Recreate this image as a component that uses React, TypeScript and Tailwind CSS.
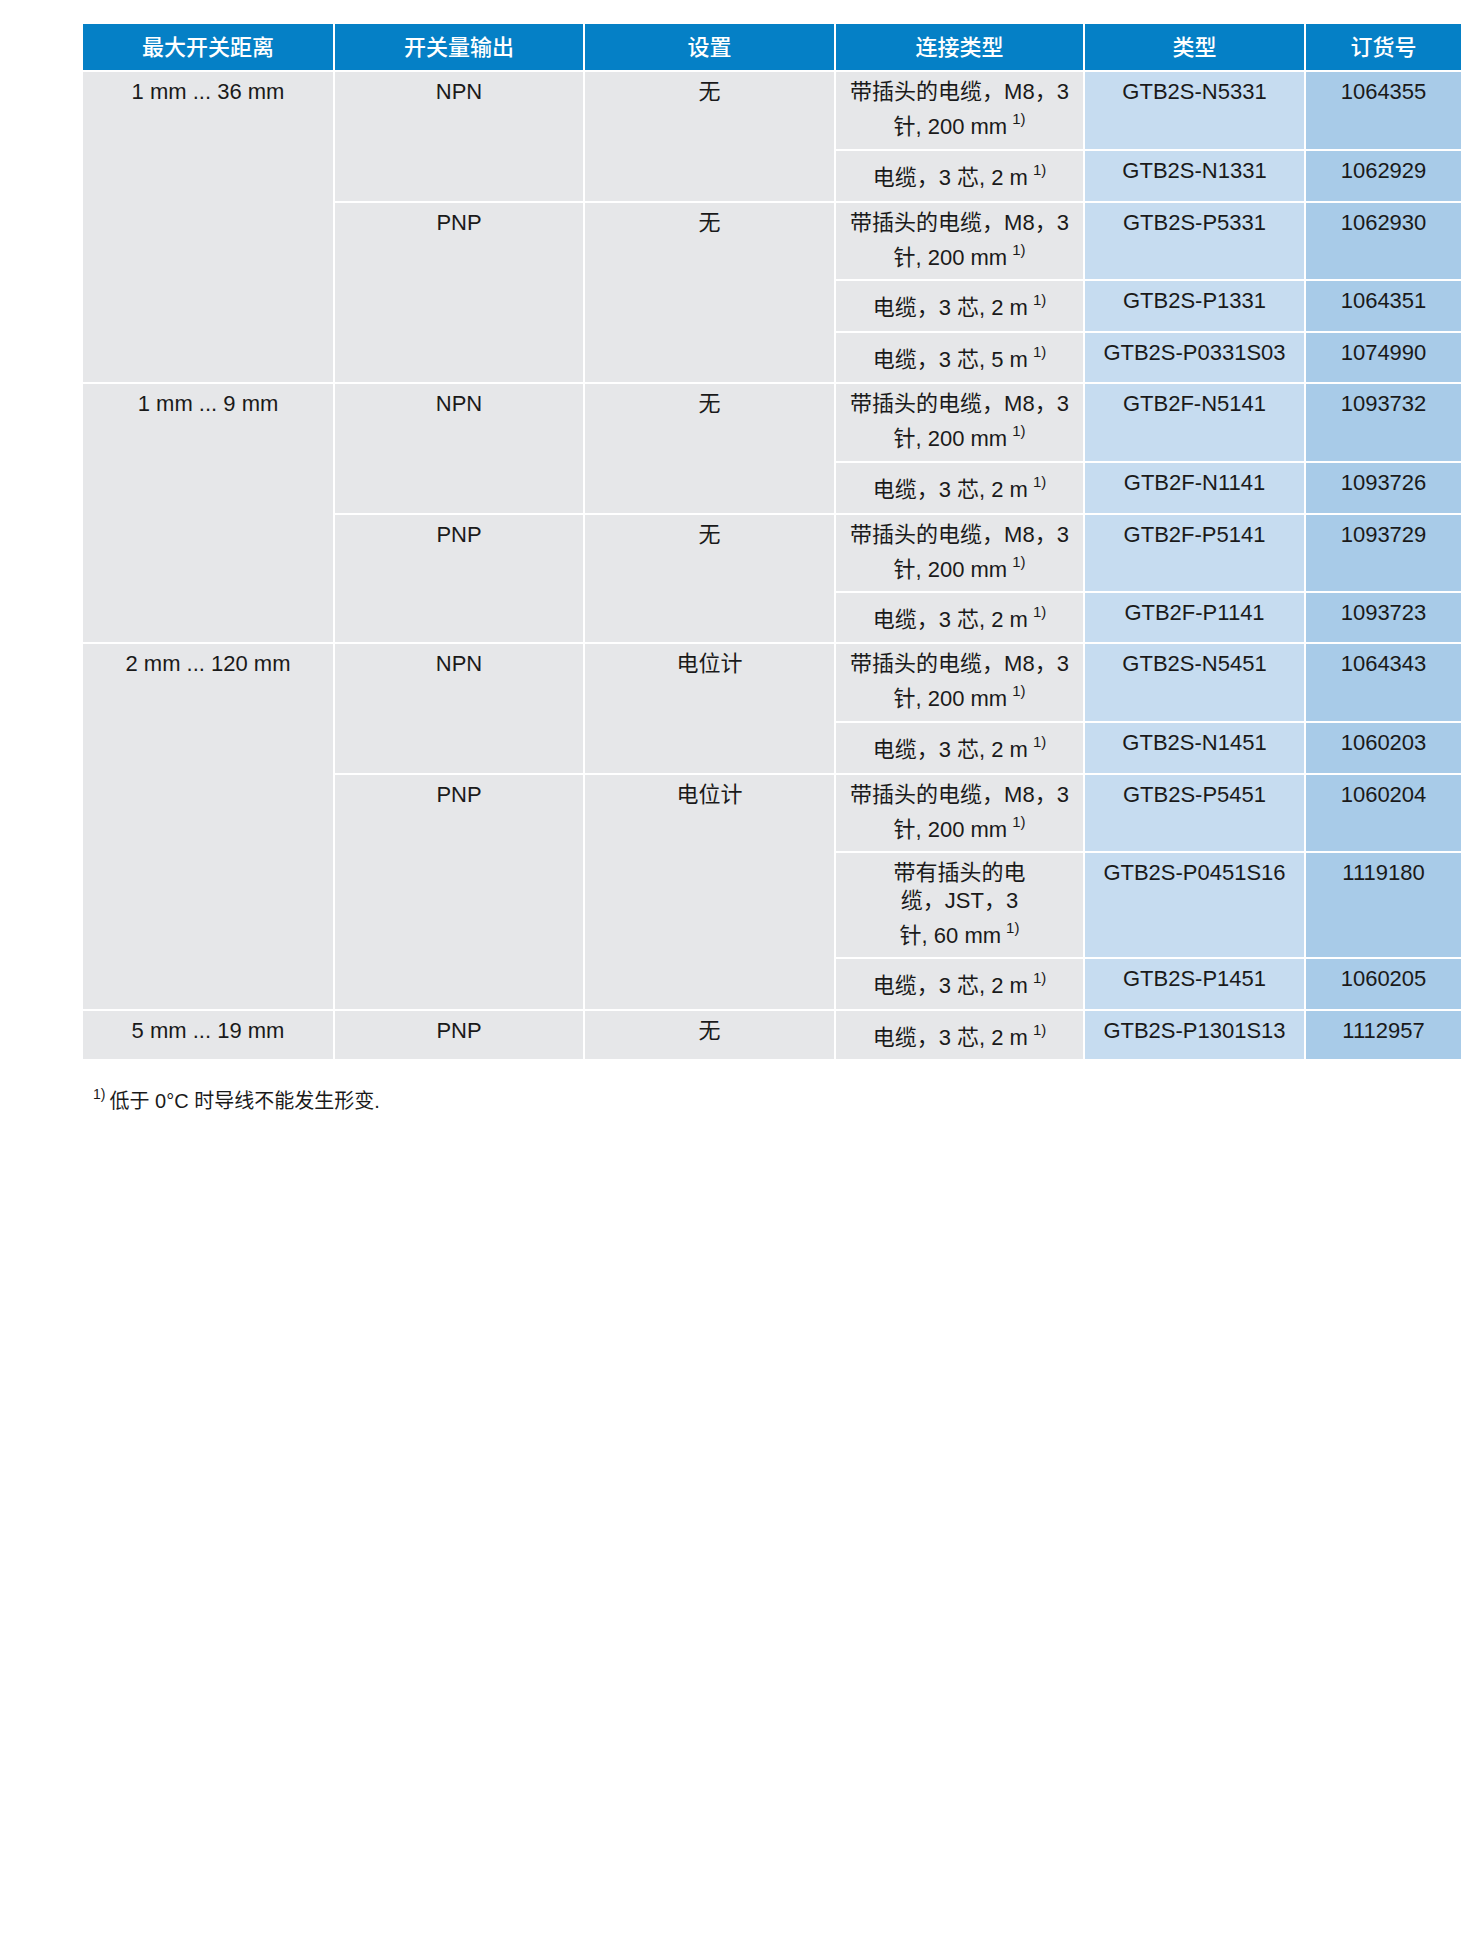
import React from "react";

type Row = { conn: string[]; type: string; order: string; h: number };
type Output = { out: string; set: string; rows: Row[] };
type Group = { range: string; outputs: Output[] };

const M8 = ["带插头的电缆，M8，3", "针, 200 mm"];

const groups: Group[] = [
  {
    range: "1 mm ... 36 mm",
    outputs: [
      {
        out: "NPN",
        set: "无",
        rows: [
          { conn: M8, type: "GTB2S-N5331", order: "1064355", h: 77 },
          { conn: ["电缆，3 芯, 2 m"], type: "GTB2S-N1331", order: "1062929", h: 50 },
        ],
      },
      {
        out: "PNP",
        set: "无",
        rows: [
          { conn: M8, type: "GTB2S-P5331", order: "1062930", h: 76 },
          { conn: ["电缆，3 芯, 2 m"], type: "GTB2S-P1331", order: "1064351", h: 50 },
          { conn: ["电缆，3 芯, 5 m"], type: "GTB2S-P0331S03", order: "1074990", h: 49 },
        ],
      },
    ],
  },
  {
    range: "1 mm ... 9 mm",
    outputs: [
      {
        out: "NPN",
        set: "无",
        rows: [
          { conn: M8, type: "GTB2F-N5141", order: "1093732", h: 77 },
          { conn: ["电缆，3 芯, 2 m"], type: "GTB2F-N1141", order: "1093726", h: 50 },
        ],
      },
      {
        out: "PNP",
        set: "无",
        rows: [
          { conn: M8, type: "GTB2F-P5141", order: "1093729", h: 76 },
          { conn: ["电缆，3 芯, 2 m"], type: "GTB2F-P1141", order: "1093723", h: 49 },
        ],
      },
    ],
  },
  {
    range: "2 mm ... 120 mm",
    outputs: [
      {
        out: "NPN",
        set: "电位计",
        rows: [
          { conn: M8, type: "GTB2S-N5451", order: "1064343", h: 77 },
          { conn: ["电缆，3 芯, 2 m"], type: "GTB2S-N1451", order: "1060203", h: 50 },
        ],
      },
      {
        out: "PNP",
        set: "电位计",
        rows: [
          { conn: M8, type: "GTB2S-P5451", order: "1060204", h: 76 },
          {
            conn: ["带有插头的电", "缆，JST，3", "针, 60 mm"],
            type: "GTB2S-P0451S16",
            order: "1119180",
            h: 104,
          },
          { conn: ["电缆，3 芯, 2 m"], type: "GTB2S-P1451", order: "1060205", h: 50 },
        ],
      },
    ],
  },
  {
    range: "5 mm ... 19 mm",
    outputs: [
      {
        out: "PNP",
        set: "无",
        rows: [{ conn: ["电缆，3 芯, 2 m"], type: "GTB2S-P1301S13", order: "1112957", h: 48 }],
      },
    ],
  },
];

const headers = ["最大开关距离", "开关量输出", "设置", "连接类型", "类型", "订货号"];
const widths = ["w-[250px]", "w-[248px]", "w-[249px]", "w-[247px]", "w-[219px]", "w-[155px]"];

const cell = "align-top text-center pt-[6px] leading-[28px] whitespace-nowrap";

function Sup() {
  return <sup className="ml-[5px] text-[15px] top-[-10px]">1)</sup>;
}

function Conn({ lines }: { lines: string[] }) {
  return (
    <>
      {lines.map((l, i) =>
        i === lines.length - 1 ? (
          <div key={i} className="pt-[7px]">
            {l}
            <Sup />
          </div>
        ) : (
          <div key={i}>{l}</div>
        )
      )}
    </>
  );
}

export default function App() {
  return (
    <div
      className="min-h-[1936px] bg-white pt-[22px] pl-[81px] text-[#1a1a1a]"
      style={{ fontFamily: '"Liberation Sans", "Noto Sans CJK SC", sans-serif' }}
    >
      <table className="w-[1382px] table-fixed border-separate border-spacing-[2px] text-[22px]">
        <thead>
          <tr className="h-[46px]">
            {headers.map((h, i) => (
              <th
                key={h}
                className={`${widths[i]} bg-[#0580c6] text-white font-medium text-center align-middle`}
              >
                {h}
              </th>
            ))}
          </tr>
        </thead>
        <tbody>
          {groups.map((g) => {
            const groupCount = g.outputs.reduce((n, o) => n + o.rows.length, 0);
            return g.outputs.map((o, oi) =>
              o.rows.map((r, ri) => (
                <tr key={r.type} style={{ height: r.h }}>
                  {oi === 0 && ri === 0 && (
                    <td rowSpan={groupCount} className={`${cell} bg-[#e6e7e9]`}>
                      {g.range}
                    </td>
                  )}
                  {ri === 0 && (
                    <td rowSpan={o.rows.length} className={`${cell} bg-[#e6e7e9]`}>
                      {o.out}
                    </td>
                  )}
                  {ri === 0 && (
                    <td rowSpan={o.rows.length} className={`${cell} bg-[#e6e7e9]`}>
                      {o.set}
                    </td>
                  )}
                  <td className={`${cell} bg-[#e6e7e9]`}>
                    <Conn lines={r.conn} />
                  </td>
                  <td className={`${cell} bg-[#c6dcf0]`}>{r.type}</td>
                  <td className={`${cell} bg-[#a8cbe8]`}>{r.order}</td>
                </tr>
              ))
            );
          })}
        </tbody>
      </table>
      <p className="mt-[26px] pl-[12px] text-[20px] leading-[28px]">
        <sup className="text-[14px] top-[-9px] mr-[4px]">1)</sup>
        低于 0°C 时导线不能发生形变.
      </p>
    </div>
  );
}
